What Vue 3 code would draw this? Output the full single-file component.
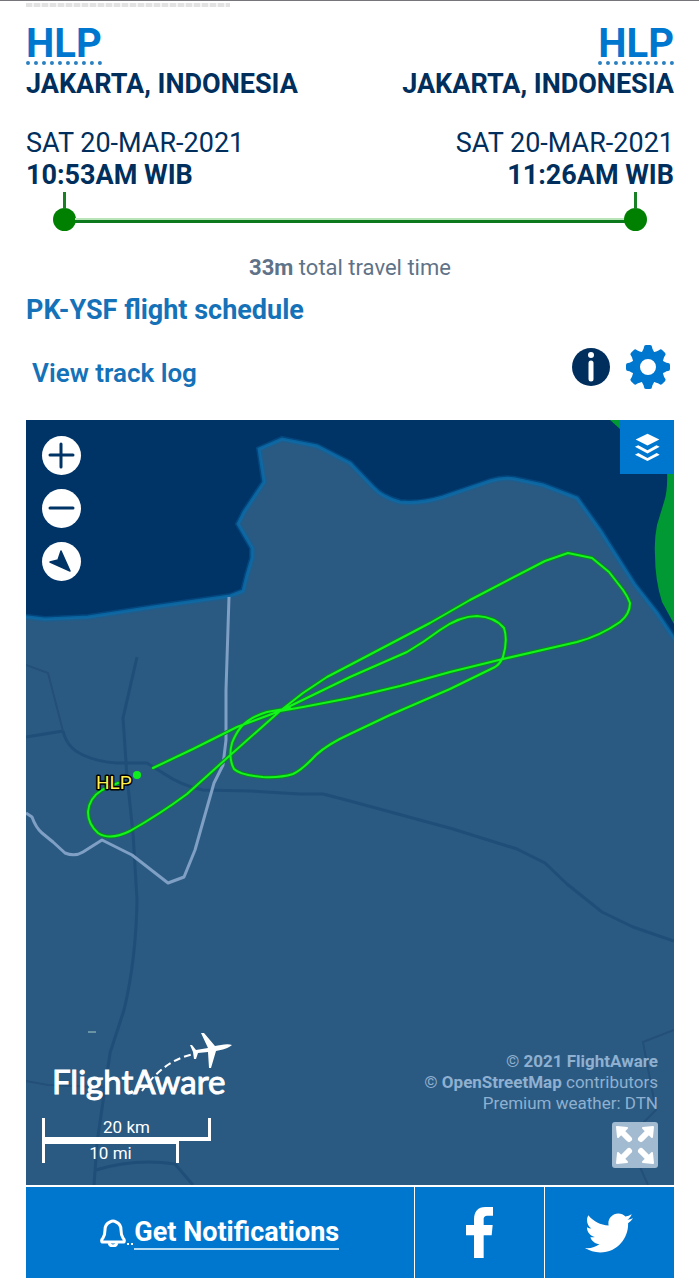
<template>
    <main class="flight">
        <div class="divider"></div>

        <section class="summary">
            <div v-for="(stop, index) in stops" :key="index" class="stop" :class="{ 'stop-end': index === 1 }">
                <a href="#" class="airport">{{ stop.code }}</a>
                <strong class="city">{{ stop.city }}</strong>
                <span class="date">{{ stop.date }}</span>
                <strong>{{ stop.time }}</strong>
            </div>
        </section>

        <div class="timeline">
            <div class="marker"></div>
            <div class="line"></div>
            <div class="marker"></div>
        </div>

        <p class="travel-time"><strong>33m</strong> total travel time</p>

        <a href="#" class="text-link">PK-YSF flight schedule</a>

        <div class="toolbar">
            <a href="#" class="text-link track-link">View track log</a>
            <div class="tools">
                <button type="button" class="icon-button" aria-label="Information">
                    <svg width="38" height="38" viewBox="0 0 38 38">
                        <circle cx="19" cy="19" r="19" fill="#002f5d" />
                        <circle cx="19" cy="7" r="3" fill="#fff" />
                        <path d="M19 15V31" stroke="#fff" stroke-width="5" stroke-linecap="round" />
                    </svg>
                </button>
                <button type="button" class="icon-button gear" aria-label="Settings">
                    <svg width="44" height="44" viewBox="-22 -22 44 44">
                        <path v-for="angle in teeth" :key="angle" :transform="`rotate(${angle})`"
                            d="M-7 -13C-6 -16 -4 -18 -4 -20Q-4 -22 -2 -22H2Q4 -22 4 -20C4 -18 6 -16 7 -13Z" fill="#0077cf" />
                        <circle r="12" fill="none" stroke="#0077cf" stroke-width="8" />
                    </svg>
                </button>
            </div>
        </div>

        <section class="map">
            <!-- map canvas -->
            <svg class="canvas" viewBox="26 420 648 765">
                <rect x="26" y="420" width="648" height="765" fill="#003366" />
                <path d="M610 420L620 429H674V420ZM667 470Q668 490 664 502L657 525Q654 540 655 555Q655 580 662 602L674 624V470Z"
                    fill="#009933" />
                <path :d="coast + 'L680 1190H20V616Z'" fill="#2a5a82" />
                <path :d="coast" fill="none" stroke="#0a67a5" stroke-width="6" opacity="0.35" />
                <path :d="coast" fill="none" stroke="#0c6ba8" stroke-width="3" opacity="0.8" />
                <g fill="none" stroke="#1f4f79" stroke-width="3" stroke-linejoin="round">
                    <path v-for="road in roads" :key="road" :d="road" />
                </g>
                <g fill="none" stroke="#234f78" stroke-width="2" stroke-linejoin="round">
                    <path v-for="road in minorRoads" :key="road" :d="road" />
                </g>
                <path
                    d="M26 813L32 817Q36 828 42 833L53 842L65 853Q75 857 83 852L102 840L132 855L168 883L184 877L195 850L214 783L223 765L226 740V690L229 597"
                    fill="none" stroke="#7f9fc4" stroke-width="3" stroke-linejoin="round" />
                <g fill="none" stroke-linejoin="round" stroke-linecap="round">
                    <path :d="track" stroke="#0a8a22" stroke-width="4" />
                    <path :d="track" stroke="#14f51b" stroke-width="2" />
                </g>
                <circle cx="137" cy="775" r="4" fill="#0df01d" />
                <text x="96" y="789" class="map-label">HLP</text>
                <path d="M88 1032H96" stroke="#a9cdc9" />
            </svg>

            <div class="zoom-controls">
                <button type="button" aria-label="Zoom in">
                    <svg width="39" height="39" viewBox="0 0 39 39">
                        <path d="M8 19H31M19 8V31" stroke="#003366" stroke-width="3" stroke-linecap="round" />
                    </svg>
                </button>
                <button type="button" aria-label="Zoom out">
                    <svg width="39" height="39" viewBox="0 0 39 39">
                        <path d="M8 19H31" stroke="#003366" stroke-width="3" stroke-linecap="round" />
                    </svg>
                </button>
                <button type="button" aria-label="Center on flight">
                    <svg width="39" height="39" viewBox="0 0 39 39">
                        <path d="M19 9L28 29L8 20L16 18Z" fill="#003366" stroke="#003366" stroke-width="1.5"
                            stroke-linejoin="round" />
                    </svg>
                </button>
            </div>

            <button type="button" class="layers" aria-label="Map layers">
                <svg width="27" height="29" viewBox="281 308 80 88" fill="#fff">
                    <path
                        d="M285 328L321 310L357 328L321 346ZM283 350L293 345L321 360L348 345L358 350L321 370ZM283 374L293 369L321 384L349 369L358 374L321 393Z" />
                </svg>
            </button>

            <div class="brand">
                <svg class="logo" width="184" height="74" viewBox="0 0 184 74">
                    <text x="0" y="62" class="logo-text">FlightAware</text>
                    <path d="M90 59Q112 28 142 22" fill="none" stroke="#fff" stroke-width="2" stroke-dasharray="7 4" />
                    <path
                        d="M180 13C176 11 168 13 163 14L152 1L149 1L156 16L144 18L140 13L138 13L141 20L142 27L144 27L146 21L156 20L157 36L159 36L164 19C170 18 177 16 180 13Z"
                        fill="#fff" />
                </svg>
                <div class="scale">
                    <div class="scale-km">20 km</div>
                    <div class="scale-mi">10 mi</div>
                </div>
            </div>

            <div class="credits">
                <p>© <strong>2021 FlightAware</strong></p>
                <p>© <strong>OpenStreetMap</strong> contributors</p>
                <p>Premium weather: DTN</p>
                <button type="button" class="expand" aria-label="Full screen">
                    <svg width="46" height="46" viewBox="-23 -23 46 46">
                        <g v-for="angle in [0, 90, 180, 270]" :key="angle" :transform="`rotate(${angle})`">
                            <path d="M-18 -18L-8 -17L-17 -8Z" fill="#fff" stroke="#fff" stroke-width="2"
                                stroke-linejoin="round" />
                            <path d="M-13 -13L-6 -6" stroke="#fff" stroke-width="6" stroke-linecap="round" />
                        </g>
                    </svg>
                </button>
            </div>
        </section>

        <nav class="actions">
            <a href="#" class="notify">
                <svg width="26" height="28" viewBox="0 0 26 28" fill="none" stroke="#fff" stroke-width="3"
                    stroke-linejoin="round">
                    <path d="M10 3Q13 1 16 3Q21 5 21 11Q21 16 23 19Q25 21 24 23H2Q1 21 3 19Q5 16 5 11Q5 5 10 3Z" />
                    <path d="M9 24Q10 27 13 27Q16 27 17 24" />
                </svg>
                <svg width="8" height="28" viewBox="0 0 8 28" fill="#fff">
                    <path d="M1 24H3V26H1ZM5 24H7V26H5Z" />
                </svg>
                <span>Get Notifications</span>
            </a>
            <a href="#" aria-label="Share on Facebook">
                <svg width="27" height="51" viewBox="204 102 81 153" fill="#fff">
                    <path
                        d="M228 255V187H204V156H228V140C228 115 240 102 262 102H285V128H270C260 128 257 132 257 140V156H284L281 187H257V255Z" />
                </svg>
            </a>
            <a href="#" aria-label="Share on Twitter">
                <svg width="48" height="48" viewBox="0 0 512 512" fill="#fff">
                    <path
                        d="M459.37 151.716c.325 4.548.325 9.097.325 13.645 0 138.72-105.583 298.558-298.558 298.558-59.452 0-114.68-17.219-161.137-47.106 8.447.974 16.568 1.299 25.34 1.299 49.055 0 94.213-16.568 130.274-44.832-46.132-.975-84.792-31.188-98.112-72.772 6.498.974 12.995 1.624 19.818 1.624 9.421 0 18.843-1.3 27.614-3.573-48.081-9.747-84.143-51.98-84.143-102.985v-1.299c13.969 7.797 30.214 12.67 47.431 13.319-28.264-18.843-46.781-51.005-46.781-87.391 0-19.492 5.197-37.36 14.294-52.954 51.655 63.675 129.3 105.258 216.365 109.807-1.624-7.797-2.599-15.918-2.599-24.04 0-57.828 46.782-104.934 104.934-104.934 30.213 0 57.502 12.67 76.67 33.137 23.715-4.548 46.456-13.32 66.599-25.34-7.798 24.366-24.366 44.833-46.132 57.827 21.117-2.273 41.584-8.122 60.426-16.243-14.292 20.791-32.161 39.308-52.628 54.253z" />
                </svg>
            </a>
        </nav>
    </main>
</template>


<script setup>
const stops = [
    { code: 'HLP', city: 'JAKARTA, INDONESIA', date: 'SAT 20-MAR-2021', time: '10:53AM WIB' },
    { code: 'HLP', city: 'JAKARTA, INDONESIA', date: 'SAT 20-MAR-2021', time: '11:26AM WIB' },
];

const teeth = [0, 45, 90, 135, 180, 225, 270, 315];

const coast = 'M20 616L45 619L88 617L153 607L230 596L243 591L247 575L252 558V548L238 524L244 512L264 482L259 449'
    + 'L282 439L317 446L350 463L373 487Q382 497 400 502Q420 504 443 497L490 481Q505 476 520 480L543 485L577 498'
    + 'L600 530L635 585L657 613L680 647';

const roads = [
    'M63 731Q67 748 83 755Q98 762 117 763H147L163 773Q182 786 203 790L250 791L300 794H323L350 801L453 829L517 849L545 863L567 884L602 912L633 927L674 941',
    'M26 737L63 731',
    'M137 657L123 718L127 777L133 833L137 900Q136 960 124 1010L110 1053L97 1143L94 1185',
    'M96 1170Q135 1158 175 1164L193 1185',
];

const minorRoads = [
    'M26 665L48 673L63 731',
    'M26 1081L48 1085L103 1087',
    'M674 1030L643 1042L645 1053L656 1110L643 1123L640 1167L648 1185',
];

// take-off, wide circuit, second circuit, landing turn
const track = 'M153 768L193 749L237 727L280 711L303 707L350 698L400 686L450 672L503 659L577 642Q600 636 620 622'
    + 'Q630 614 630 603Q628 597 623 590L609 572L592 558L568 553L545 561L470 600L430 623L350 665L327 677L303 693'
    + 'L280 711L227 758L187 794Q160 814 130 831Q110 841 98 833Q88 824 88 812Q89 798 102 790L118 783'
    + 'M280 711L350 677L407 652Q424 642 440 630Q460 616 477 616Q495 617 504 628Q508 640 503 657Q500 664 495 667'
    + 'L450 689L390 715L350 734Q328 744 316 755Q302 770 293 774Q280 778 263 777Q240 775 234 769Q228 758 232 743'
    + 'Q236 733 241 727Q250 717 267 712L290 708';
</script>

<style>
body {
    margin: 0;
    background-color: #fff;
}
</style>

<style scoped>
.flight {
    padding: 0 25px 0 26px;
    border-top: 1px solid #77757a;
    color: #002f5d;
    font-family: Roboto, "Liberation Sans", sans-serif;
    font-size: 27px;
    line-height: 32px;
}

.flight strong {
    font-weight: 700;
}

a {
    color: #0077cf;
    text-decoration: none;
}

p {
    margin: 0;
}

button {
    padding: 0;
    border: 0;
    background: none;
    cursor: pointer;
}

svg {
    display: block;
}

.divider {
    width: 204px;
    height: 4px;
    margin-top: 2px;
    background: repeating-linear-gradient(90deg, #e2e2e2 0 6px, #f4f4f4 6px 8px);
}

.summary {
    display: flex;
    justify-content: space-between;
    padding-top: 20px;
}

.stop {
    display: flex;
    flex-direction: column;
    align-items: flex-start;
}

.stop-end {
    align-items: flex-end;
}

.airport {
    margin-bottom: 3px;
    border-bottom: 4px dotted #2a80c0;
    font-size: 40px;
    font-weight: 700;
    line-height: 34px;
}

.city {
    margin-bottom: 27px;
}

.date {
    font-weight: 400;
}

.timeline {
    display: flex;
    align-items: flex-end;
    padding: 17px 27px 0;
}

.marker {
    width: 23px;
    height: 23px;
    border-radius: 50%;
    background-color: #008000;
}

/* stem above the dot */
.marker::before {
    content: "";
    display: block;
    width: 3px;
    height: 17px;
    margin: -16px auto 0;
    background-color: #1a8026;
}

.line {
    flex: 1;
    height: 3px;
    margin: 0 -1px 8px;
    border-top: 2px solid #b9e4b9;
    background-color: #0c7a1c;
}

.travel-time {
    margin-top: 21px;
    color: #5f7388;
    font-size: 22px;
    text-align: center;
}

.text-link {
    display: block;
    color: #1572b8;
    font-weight: 700;
}

.track-link {
    font-size: 26px;
    font-weight: 600;
}

.travel-time + .text-link {
    margin-top: 10px;
}

.toolbar {
    display: flex;
    justify-content: space-between;
    align-items: flex-end;
    padding: 19px 4px 31px 6px;
}

.tools {
    display: flex;
    align-items: center;
    gap: 16px;
}

.map {
    position: relative;
    overflow: hidden;
}

.canvas {
    width: 100%;
    height: auto;
}

.map-label {
    fill: #fff04d;
    stroke: #000;
    stroke-width: 3px;
    stroke-linejoin: round;
    paint-order: stroke;
    font-size: 19px;
}

.zoom-controls {
    position: absolute;
    top: 16px;
    left: 16px;
    display: flex;
    flex-direction: column;
    gap: 14px;
}

.zoom-controls button {
    border-radius: 50%;
    background-color: #fff;
}

.layers {
    position: absolute;
    top: 0;
    right: 0;
    display: flex;
    justify-content: center;
    align-items: center;
    width: 54px;
    height: 54px;
    background-color: #0077cf;
}

.brand {
    position: absolute;
    bottom: 22px;
    left: 16px;
    color: #fff;
}

.logo {
    margin: 0 0 12px 10px;
}

.logo-text {
    fill: #fff;
    stroke: #fff;
    stroke-width: 1px;
    font-family: Lato, sans-serif;
    font-size: 33px;
}

.scale {
    font-size: 17px;
    line-height: 19px;
    text-align: center;
}

.scale-km {
    width: 163px;
    border: solid #fff;
    border-width: 0 3px 4px;
}

.scale-mi {
    width: 131px;
    border: solid #fff;
    border-width: 3px 3px 0;
}

.credits {
    position: absolute;
    right: 16px;
    bottom: 17px;
    display: flex;
    flex-direction: column;
    align-items: flex-end;
    color: #8fb0d0;
    font-size: 17px;
    line-height: 21px;
}

.expand {
    margin-top: 8px;
    border-radius: 3px;
    background-color: #a3bbd0;
}

.actions {
    display: grid;
    grid-template-columns: 3fr 1fr 1fr;
    gap: 1px;
    margin-top: 2px;
}

.actions a {
    display: flex;
    justify-content: center;
    align-items: center;
    height: 91px;
    background-color: #0077cf;
    color: #fff;
}

.notify span {
    border-bottom: 2px solid #b5dcf5;
    font-weight: 700;
}
</style>
